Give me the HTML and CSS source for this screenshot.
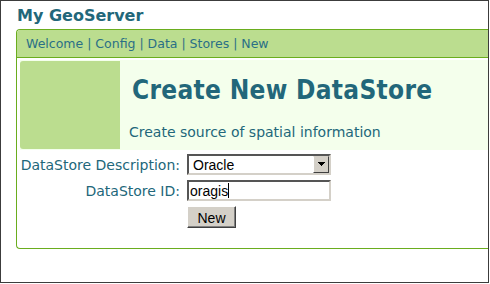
FILE: index.html
```html
<!DOCTYPE html>
<html lang="en">
<head>
  <meta charset="UTF-8">
  <title>My GeoServer</title>
  <link rel="stylesheet" href="styles.css">
</head>
<body>

  <div class="frame">
    <h1 class="titulo">My GeoServer</h1>

    <div class="caixa">
      <div class="nav">Welcome | Config | Data | Stores | New</div>

      <div class="cabecalho">
        <div class="bloco"></div>
        <div class="textos">
          <h2>Create New DataStore</h2>
          <p>Create source of spatial information</p>
        </div>
      </div>

      <form class="form">
        <label for="desc">DataStore Description:</label>
        <div class="select">
          <span>Oracle</span>
          <span class="seta"><svg width="9" height="5" viewBox="0 0 9 5"><path d="M1 0h7v1h-1v1h-1v1h-1v1h-1v-1h-1v-1h-1v-1h-1z" fill="#000"/></svg></span>
        </div>

        <label for="id">DataStore ID:</label>
        <div class="campo"><span>oragis</span><span class="cursor"></span></div>

        <span></span>
        <div><button type="button">New</button></div>
      </form>
    </div>
  </div>

</body>
</html>
```

FILE: styles.css
```css
* {
  box-sizing: border-box;
  margin: 0;
  padding: 0;
}
body {
  background: #fff;
  font-family: 'DejaVu Sans', Verdana, sans-serif;
  color: #22677a;
}
.frame {
  width: 489px;
  height: 283px;
  border: 1px solid #3c3c3c;
  padding: 4px 0 0 15px;
  overflow: hidden;
}
.titulo {
  font-size: 16px;
  font-weight: bold;
  line-height: 22px;
  padding-left: 1px;
  height: 24px;
}
.caixa {
  border: 1px solid #6aad1e;
  border-right: none;
  border-radius: 4px 0 0 4px;
  height: 220px;
}
.nav {
  background: #bbdd8f;
  border-bottom: 1px solid #6aad1e;
  height: 28px;
  padding: 6px 0 0 9px;
  font-size: 12.5px;
  color: #2a6f86;
  border-radius: 3px 0 0 0;
}
.cabecalho {
  display: flex;
  margin: 2px 0 0 3px;
  padding-top: 1px;
  background: #f4ffec;
  height: 90px;
}
.bloco {
  width: 100px;
  height: 88px;
  background: #bbdd8f;
  border-radius: 3px 0 0 3px;
}
.textos {
  padding-left: 12px;
}
.textos h2 {
  font-family: 'DejaVu Sans Condensed', 'DejaVu Sans', sans-serif;
  font-size: 26px;
  font-weight: bold;
  letter-spacing: 0.3px;
  line-height: 32px;
  margin-top: 13px;
}
.textos p {
  font-size: 14px;
  margin-top: 18px;
  margin-left: -3px;
}
.form {
  display: grid;
  grid-template-columns: 163px 144px;
  column-gap: 7px;
  row-gap: 5px;
  margin-top: 4px;
  align-items: center;
}
.form label {
  text-align: right;
  font-size: 14px;
}
.select, .campo {
  height: 21px;
  background: #fff;
  border: 2px solid;
  border-color: #555 #d4d0c8 #d4d0c8 #555;
  font-family: 'Liberation Sans', Arial, sans-serif;
  font-size: 14px;
  color: #000;
  display: flex;
  align-items: center;
}
.select span:first-child {
  flex: 1;
  padding-left: 4px;
}
.seta {
  width: 16px;
  height: 17px;
  background: #d4d0c8;
  border: 1px solid;
  border-color: #d4d0c8 #404040 #404040 #fff;
  display: flex;
  align-items: center;
  justify-content: center;
}
.campo span:first-child {
  padding-left: 1px;
}
.cursor {
  width: 1px;
  height: 15px;
  background: #000;
}
button {
  font-family: 'Liberation Sans', Arial, sans-serif;
  font-size: 14px;
  color: #000;
  background: #d4d0c8;
  border: 1px solid;
  border-color: #fff #404040 #404040 #fff;
  box-shadow: inset -1px -1px 0 #808080;
  width: 49px;
  height: 22px;
  padding-top: 1px;
}
```
